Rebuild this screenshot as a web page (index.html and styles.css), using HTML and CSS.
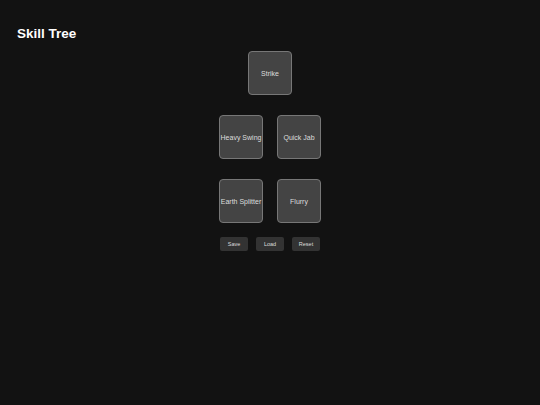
FILE: index.html
```html
<!DOCTYPE html>
<html lang="en">

<head>
    <meta charset="UTF-8">
    <meta name="viewport" content="width=device-width, initial-scale=1.0">
    <title>Skill Tree</title>
    <link rel="stylesheet" href="styles.css">
</head>

<body>
    <h1 class="page-title">Skill Tree</h1>

    <!-- Skill Tree -->
    <div class="skill-tree">
        <div class="tier">
            <div class="skill">Strike</div>
        </div>
        <div class="tier">
            <div class="skill">Heavy Swing</div>
            <div class="skill">Quick Jab</div>
        </div>
        <div class="tier">
            <div class="skill">Earth Splitter</div>
            <div class="skill">Flurry</div>
        </div>

        <!-- Controls -->
        <div class="controls">
            <button class="control-btn">Save</button>
            <button class="control-btn">Load</button>
            <button class="control-btn">Reset</button>
        </div>
    </div>
</body>

</html>
```

FILE: styles.css
```css
body {
    margin: 0;
    padding: 17px;
    background-color: #121212;
    color: #ffffff;
    font-family: "Liberation Sans", Arial, sans-serif;
}

.page-title {
    margin: 9px 0 0;
    font-size: 13.5px;
    font-weight: bold;
    line-height: 16px;
}

/* Skill Tree */
.skill-tree {
    display: flex;
    flex-direction: column;
    align-items: center;
    gap: 20px;
    margin-top: 9px;
}

.tier {
    display: flex;
    justify-content: center;
    gap: 14px;
}

.skill {
    width: 42px;
    height: 42px;
    display: flex;
    align-items: center;
    justify-content: center;
    text-align: center;
    background-color: #444444;
    border: 1px solid #777777;
    border-radius: 4px;
    color: #dddddd;
    font-size: 7px;
    white-space: nowrap;
    cursor: pointer;
}

/* Controls */
.controls {
    display: flex;
    gap: 8px;
    margin-top: -6px;
}

.control-btn {
    width: 28px;
    height: 14px;
    padding: 0;
    background-color: #333333;
    border: none;
    border-radius: 2px;
    color: #dddddd;
    font-family: "Liberation Sans", Arial, sans-serif;
    font-size: 5.5px;
    cursor: pointer;
}
```
